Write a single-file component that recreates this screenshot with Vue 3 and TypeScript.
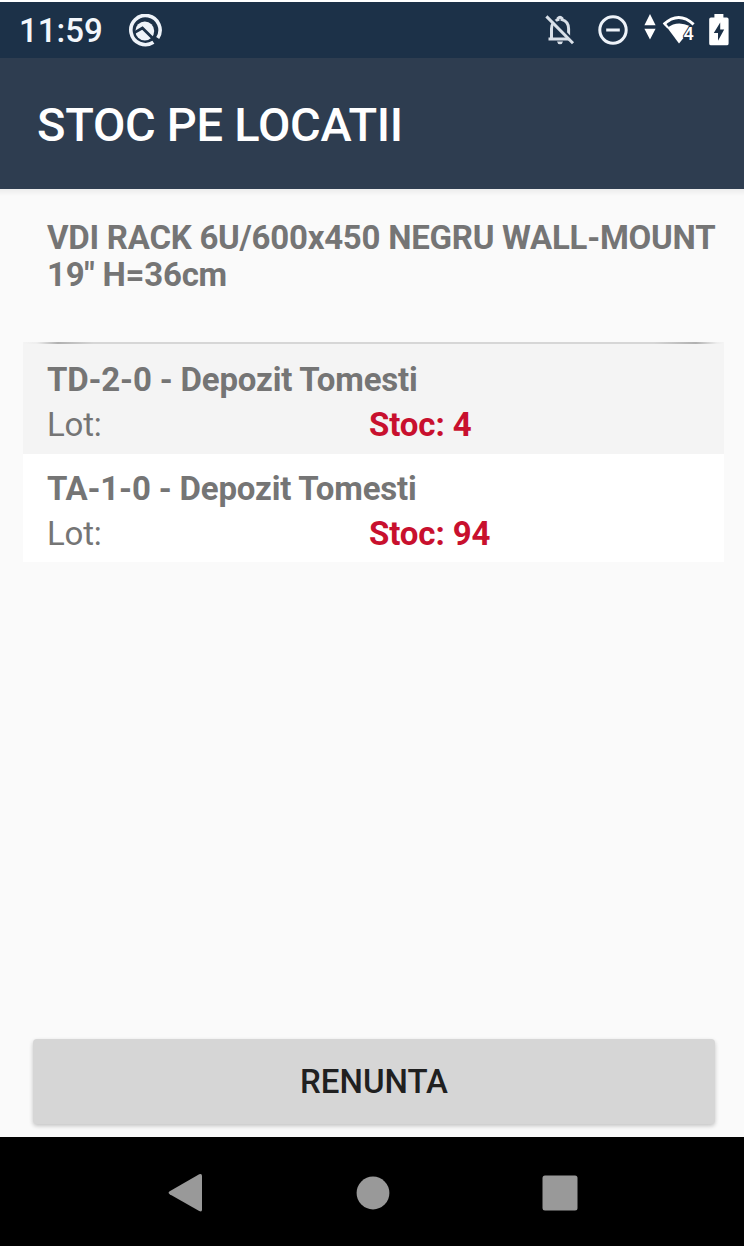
<script setup lang="ts">
interface StockRow {
  location: string
  lot: string
  stock: number
}

const product = 'VDI RACK 6U/600x450 NEGRU WALL-MOUNT 19" H=36cm'

const rows: StockRow[] = [
  { location: 'TD-2-0 - Depozit Tomesti', lot: '', stock: 4 },
  { location: 'TA-1-0 - Depozit Tomesti', lot: '', stock: 94 },
]
</script>

<template>
  <div class="screen">
    <header class="status">
      <span class="clock">11:59</span>
      <svg class="app-icon" viewBox="0 0 34 34">
        <path d="M25.4 28.3A14.6 14.6 0 1 1 29.7 24" fill="none" stroke="#eef3f9" stroke-width="3.6" />
        <circle cx="16.8" cy="17" r="9.4" fill="#eef3f9" />
        <path d="M6.5 18.6L14.4 14L28 27.6" fill="none" stroke="#1c3148" stroke-width="2.8" />
      </svg>
      <div class="indicators">
        <svg class="bell" viewBox="0 0 30 32">
          <path d="M6.5 24.4V14.8C6.5 10 9.6 6.6 13 5.6V4.5Q15 1.8 17 4.5V5.6C21 6.7 23.6 10 23.6 14.8V24.4M3.5 25H26.5" fill="none" stroke="#d9e0e8" stroke-width="3" />
          <path d="M12 27.5H18Q17.5 30.2 15 30.2T12 27.5Z" fill="#d9e0e8" />
          <path d="M3.4 1.2L29.5 27.8" stroke="#1c3148" stroke-width="2.4" />
          <path d="M1.4 2.4L28 29.2" stroke="#d9e0e8" stroke-width="3" />
        </svg>
        <svg class="dnd" viewBox="0 0 30 30">
          <circle cx="15" cy="15" r="13.2" fill="none" stroke="#eef3f9" stroke-width="3" />
          <path d="M8.2 15H21.8" stroke="#eef3f9" stroke-width="3" />
        </svg>
        <svg class="traffic" viewBox="0 0 12 26">
          <path d="M6 0L11.6 11.2H.4ZM6 25.5L.4 14.8H11.6Z" fill="#fff" />
        </svg>
        <svg class="wifi" viewBox="0 0 34 30">
          <path d="M1.8 9.4Q16.7 -4.5 31.6 9.4" fill="none" stroke="#fff" stroke-width="3" />
          <path d="M.8 8.4L3.2 7.5L7 12.2L5.3 13.6Z" fill="#fff" />
          <path d="M5.3 12.8Q15 5.2 27.8 11L22.3 22L17 28.4Z" fill="#fff" />
          <text x="21.6" y="24.6" class="wifi-label">4</text>
        </svg>
        <svg class="battery" viewBox="0 0 20 32">
          <path d="M5.4 0H14.4V3.4H17.8Q19.6 3.4 19.6 5.2V29.4Q19.6 31.3 17.8 31.3H2Q.2 31.3 .2 29.4V5.2Q.2 3.4 2 3.4H5.4Z" fill="#fff" />
          <path d="M11.2 8.5L4.8 18.9H9V26.7L15.2 15.6H11.2Z" fill="#1c3148" />
        </svg>
      </div>
    </header>

    <div class="appbar"><h1>STOC PE LOCATII</h1></div>

    <main class="content">
      <p class="product">{{ product }}</p>
      <ul class="list">
        <li v-for="row in rows" :key="row.location" class="row">
          <div class="location">{{ row.location }}</div>
          <div class="details">
            <span class="lot">Lot: {{ row.lot }}</span>
            <span class="stock">Stoc: {{ row.stock }}</span>
          </div>
        </li>
      </ul>
      <button class="cancel" type="button">RENUNTA</button>
    </main>

    <nav class="navbar">
      <svg viewBox="0 0 36 40"><path d="M1.7 18.2L31.2 1.3Q34 .2 34 3V36.8Q34 39.2 31.2 38L1.7 21.2Q-.5 19.7 1.7 18.2Z" fill="#999" /></svg>
      <svg viewBox="0 0 36 40"><circle cx="18" cy="20" r="16.4" fill="#999" /></svg>
      <svg viewBox="0 0 36 40"><rect x=".5" y="2.4" width="35" height="35.2" rx="2.5" fill="#999" /></svg>
    </nav>
  </div>
</template>

<style>
body {
  background: #fff;
}
</style>

<style scoped>
.screen {
  box-sizing: border-box;
  width: 744px;
  height: 1248px;
  padding: 2px 0;
  display: flex;
  flex-direction: column;
  font-family: Roboto, 'Liberation Sans', sans-serif;
  background: #fff;
  overflow: hidden;
}
svg {
  display: block;
  flex: none;
}
.status {
  height: 56px;
  flex: none;
  display: flex;
  align-items: center;
  background: #1c3148;
  box-sizing: border-box;
  padding: 0 15px 0 19px;
}
.clock {
  width: 109px;
  font-size: 33px;
  line-height: 38px;
  font-weight: 500;
  color: #f3f7fc;
  padding-top: 2px;
  box-sizing: border-box;
}
.app-icon {
  width: 34px;
  height: 34px;
  margin-top: 2px;
}
.indicators {
  margin-left: auto;
  display: flex;
  align-items: center;
}
.bell {
  width: 30px;
  height: 32px;
  margin-right: 23px;
}
.dnd {
  width: 30px;
  height: 30px;
  margin-right: 16px;
}
.traffic {
  width: 12px;
  height: 26px;
  margin: 0 6px 6px 0;
}
.wifi {
  width: 34px;
  height: 30px;
  margin-right: 13px;
}
.wifi-label {
  font: 500 18px Roboto, sans-serif;
  fill: #fff;
  stroke: #1c3148;
  stroke-width: 2px;
  paint-order: stroke;
}
.battery {
  width: 20px;
  height: 32px;
  margin-bottom: 1px;
}
.appbar {
  height: 131px;
  flex: none;
  box-sizing: border-box;
  display: flex;
  align-items: center;
  padding: 2px 0 0 37px;
  background: #2e3d50;
}
h1 {
  margin: 0;
  font-size: 47px;
  line-height: 56px;
  font-weight: 500;
  letter-spacing: -0.27px;
  color: #fff;
  white-space: nowrap;
}
.content {
  height: 948px;
  flex: none;
  box-sizing: border-box;
  display: flex;
  flex-direction: column;
  padding: 30px 20px 13px 23px;
  background: linear-gradient(#ececec, #fafafa 7px);
}
.product {
  margin: 0 0 0 24px;
  height: 123px;
  font-size: 33px;
  line-height: 37px;
  font-weight: 700;
  letter-spacing: -0.25px;
  color: #757575;
}
.list {
  margin: 0;
  padding: 0;
  list-style: none;
}
.row {
  box-sizing: border-box;
  height: 108px;
  padding: 12px 24px 0;
  background: #fff;
  color: #757575;
  font-size: 33px;
  line-height: 45px;
}
.row:first-child {
  height: 112px;
  padding-top: 15px;
  background: linear-gradient(90deg, #f4f4f4, #eee 2%, #b0b0b0 5%, #d6d6d6 10%, #d6d6d6 90%, #b0b0b0 96%, #eee 99%, #f4f4f4) top / 100% 2px no-repeat #f4f4f4;
}
.location {
  font-weight: 700;
  letter-spacing: -0.18px;
}
.details {
  display: grid;
  grid-template-columns: 322px 1fr;
}
.lot {
  letter-spacing: -0.2px;
}
.stock {
  font-weight: 700;
  letter-spacing: -0.12px;
  color: #c8102e;
}
.cancel {
  margin: auto 9px 0 10px;
  height: 85px;
  padding: 0;
  border: 0;
  border-radius: 4px;
  background: #d6d6d6;
  box-shadow: 0 2px 4px rgba(0, 0, 0, 0.22);
  font: 500 33px Roboto, sans-serif;
  color: #202020;
}
.navbar {
  flex: 1;
  display: flex;
  align-items: center;
  justify-content: center;
  gap: 151px;
  background: #000;
  padding: 3px 0 0 2px;
}
.navbar svg {
  width: 36px;
  height: 40px;
}
</style>
